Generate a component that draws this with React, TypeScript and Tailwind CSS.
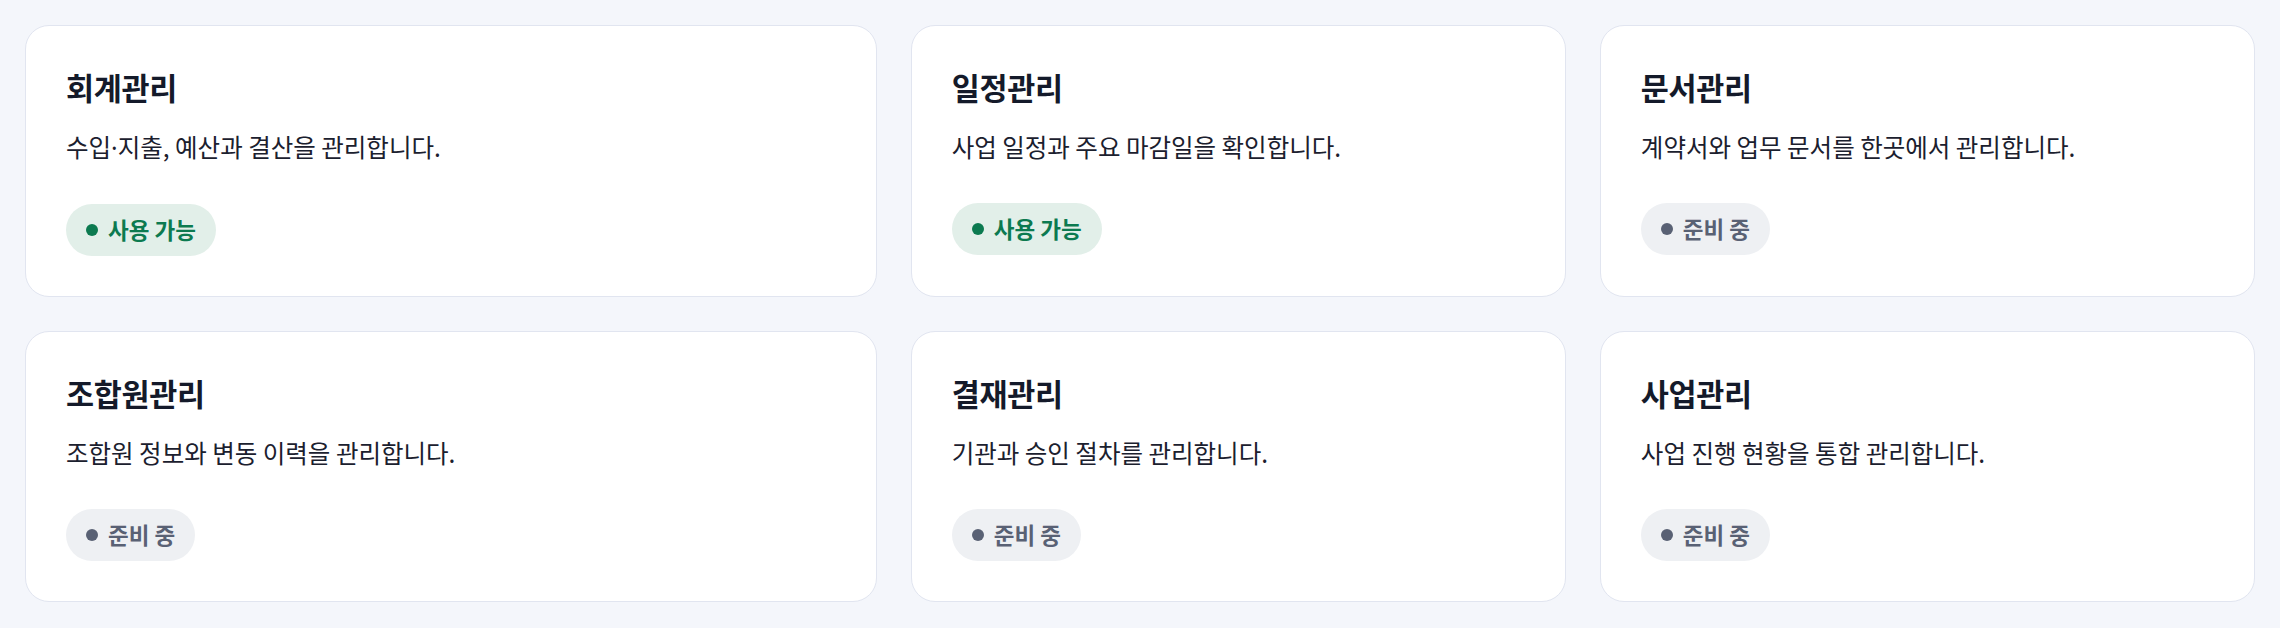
import React from 'react';

type Item = { title: string; description: React.ReactNode; ready: boolean };

const Dot = () => <span className="font-['Noto_Sans',sans-serif]">·</span>;

const items: Item[] = [
  {
    title: '회계관리',
    description: (
      <>
        수입<Dot />지출, 예산과 결산을 관리합니다.
      </>
    ),
    ready: true,
  },
  { title: '일정관리', description: '사업 일정과 주요 마감일을 확인합니다.', ready: true },
  { title: '문서관리', description: '계약서와 업무 문서를 한곳에서 관리합니다.', ready: false },
  { title: '조합원관리', description: '조합원 정보와 변동 이력을 관리합니다.', ready: false },
  { title: '결재관리', description: '기관과 승인 절차를 관리합니다.', ready: false },
  { title: '사업관리', description: '사업 진행 현황을 통합 관리합니다.', ready: false },
];

const StatusBadge: React.FC<{ ready: boolean }> = ({ ready }) => (
  <span
    className={`inline-flex h-[52px] items-center gap-[10px] self-start rounded-full px-5 text-[22.5px] font-bold ${
      ready ? 'bg-[#e2efe9] text-[#0c7a50]' : 'bg-[#eef0f3] text-[#596174]'
    }`}
  >
    <span className={`h-3 w-3 rounded-full ${ready ? 'bg-[#0c7a50]' : 'bg-[#596174]'}`} />
    {ready ? '사용 가능' : '준비 중'}
  </span>
);

const ModuleCard: React.FC<{ item: Item }> = ({ item }) => (
  <div className="flex flex-col rounded-3xl border border-[#e1e5f0] bg-white px-10 pt-[41px] pb-10">
    <h3 className="text-[30.5px] leading-[40px] font-bold tracking-[-0.01em] text-[#141a2a]">{item.title}</h3>
    <p className="mt-6 text-[24.5px] leading-[32px] text-[#1b202e]">{item.description}</p>
    <div className="mt-10 flex">
      <StatusBadge ready={item.ready} />
    </div>
  </div>
);

export default function App() {
  return (
    <div
      className="min-h-screen bg-[#f4f6fb] px-[25px] py-[25px]"
      style={{ fontFamily: '"Noto Sans CJK KR", "Noto Sans", sans-serif' }}
    >
      <div className="grid grid-cols-[1.3fr_1fr_1fr] gap-x-[34px] gap-y-[34px]">
        {items.map((item) => (
          <ModuleCard key={item.title} item={item} />
        ))}
      </div>
    </div>
  );
}
